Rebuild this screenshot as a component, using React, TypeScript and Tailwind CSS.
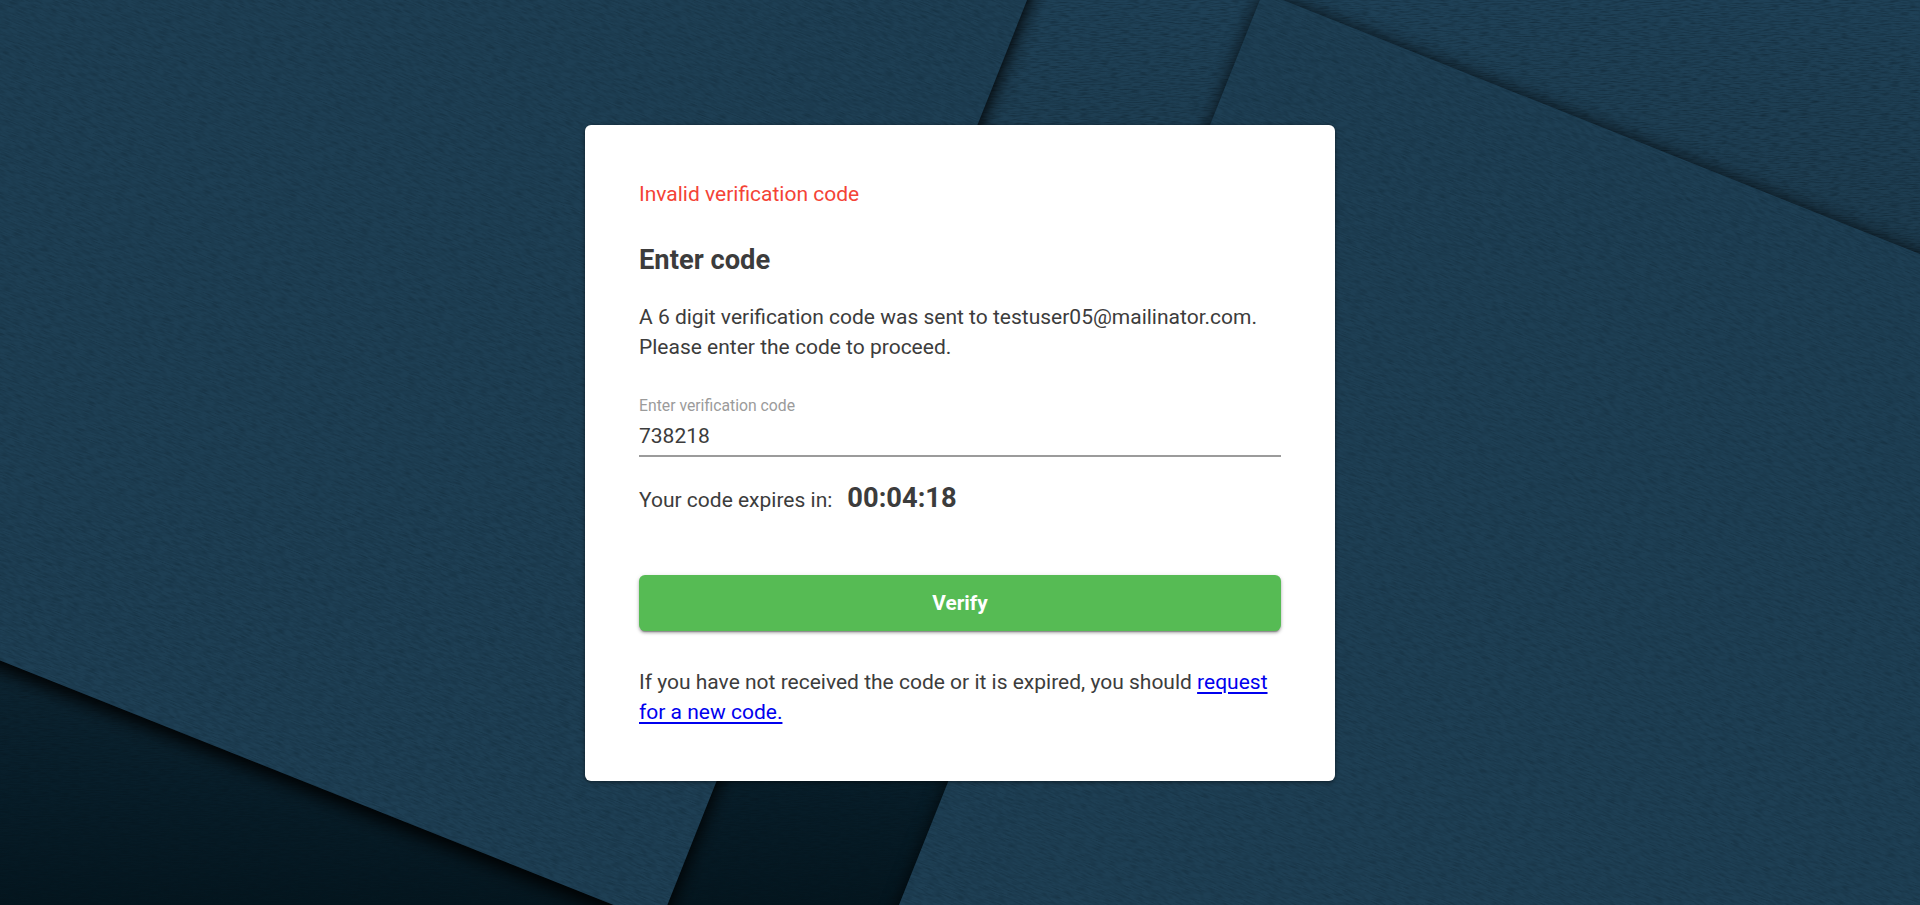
import { useState } from "react";

const LEFT_SHAPE = "M-40-40H1043L660 923.5L-40 644.5Z";
const RIGHT_SHAPE = "M1263-8L1960 270V945H883Z";

function Sheet({ clip }: { clip: string }) {
  return (
    <g clipPath={clip}>
      <rect width="1920" height="905" fill="#1e3f54" />
      <g transform="rotate(21.7 960 452)">
        <rect x="-200" y="-400" width="2400" height="1700" filter="url(#grain)" opacity="0.45" />
      </g>
    </g>
  );
}

function Backdrop() {
  return (
    <svg
      className="absolute inset-0 h-full w-full"
      viewBox="0 0 1920 905"
      preserveAspectRatio="xMidYMid slice"
      aria-hidden="true"
    >
      <defs>
        <linearGradient id="base" x1="0" y1="0" x2="0" y2="905" gradientUnits="userSpaceOnUse">
          <stop offset="0" stopColor="#1f4157" />
          <stop offset="0.28" stopColor="#1d3b4e" />
          <stop offset="0.86" stopColor="#081e2a" />
          <stop offset="1" stopColor="#04161f" />
        </linearGradient>
        <filter id="grain" x="0" y="0" width="100%" height="100%" colorInterpolationFilters="sRGB">
          <feTurbulence type="fractalNoise" baseFrequency="0.1 0.85" numOctaves="2" seed="4" />
          <feColorMatrix values="0 0 0 0 0.02  0 0 0 0 0.07  0 0 0 0 0.1  1.2 0 0 0 -0.48" />
        </filter>
        <filter id="soft" x="-10%" y="-10%" width="120%" height="120%">
          <feGaussianBlur stdDeviation="9" />
        </filter>
        <clipPath id="leftClip">
          <path d={LEFT_SHAPE} />
        </clipPath>
        <clipPath id="rightClip">
          <path d={RIGHT_SHAPE} />
        </clipPath>
      </defs>
      <rect width="1920" height="905" fill="url(#base)" />
      <rect width="1920" height="905" filter="url(#grain)" opacity="0.6" />
      <path d={RIGHT_SHAPE} fill="#000" opacity="0.75" filter="url(#soft)" />
      <Sheet clip="url(#rightClip)" />
      <path d={LEFT_SHAPE} transform="translate(0 8)" fill="#000" filter="url(#soft)" />
      <Sheet clip="url(#leftClip)" />
    </svg>
  );
}

export default function App() {
  const [code, setCode] = useState("738218");

  return (
    <main className="relative flex h-[905px] w-full justify-center overflow-hidden bg-[#1e3e53] pt-[125px] font-['Roboto',sans-serif] text-[21px] leading-[30px] text-[#3c3c3c]">
      <Backdrop />
      <section className="relative h-[656px] w-[750px] rounded-[6px] bg-white px-[54px] pt-[54px] shadow-[0_1px_4px_rgba(0,0,0,0.5)]">
        <p className="text-[#f44336]">Invalid verification code</p>
        <h1 className="mt-[35px] text-[27.3px] font-bold leading-[32px]">Enter code</h1>
        <p className="mt-[26px]">
          A 6 digit verification code was sent to testuser05@mailinator.com. Please enter the code to
          proceed.
        </p>
        <label className="mt-[34px] block">
          <span className="block text-[15.75px] leading-[20px] text-[#9b9b9b]">Enter verification code</span>
          <input
            className="mt-[6px] block h-[35px] w-full border-b-2 border-[#9b9b9b] bg-transparent pb-[5px] outline-none"
            value={code}
            onChange={(e) => setCode(e.target.value)}
          />
        </label>
        <p className="mt-[26px] flex items-baseline gap-[15px]">
          <span>Your code expires in:</span>
          <strong className="text-[27.3px] font-bold">00:04:18</strong>
        </p>
        <button className="mt-[60px] block h-14 w-full rounded-[6px] bg-[#56bb54] text-[20.8px] font-bold text-white shadow-[0_3px_1px_-2px_rgba(0,0,0,0.25),0_2px_3px_rgba(0,0,0,0.25),0_1px_5px_rgba(0,0,0,0.12)]">
          Verify
        </button>
        <p className="mt-9">
          If you have not received the code or it is expired, you should{" "}
          <a href="#" className="text-[#0000ee] underline decoration-2 underline-offset-[3px]">
            request for a new code.
          </a>
        </p>
      </section>
    </main>
  );
}
